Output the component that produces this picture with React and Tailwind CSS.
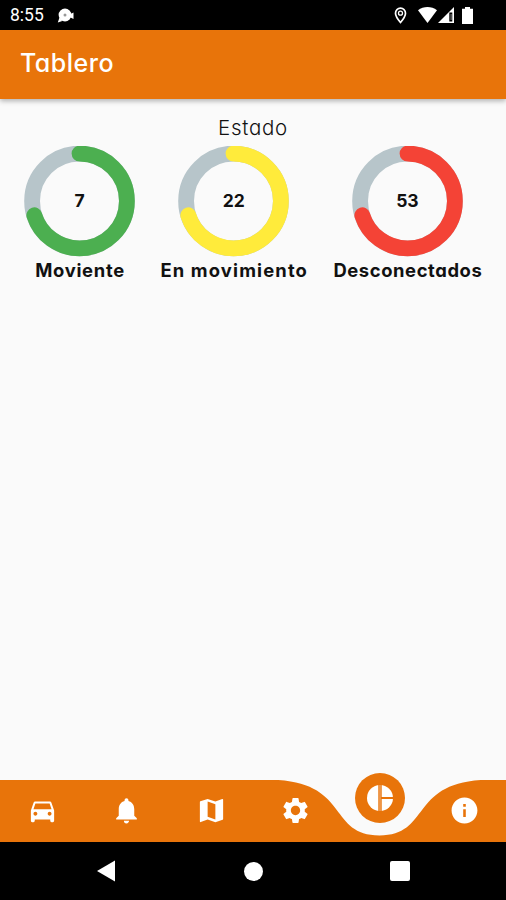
import React from 'react';
import { MdDirectionsCar, MdNotifications, MdMap, MdSettings, MdInfo } from 'react-icons/md';

const RADIUS = 47.4;
const CIRCUMFERENCE = 2 * Math.PI * RADIUS;

const stats = [
    { label: 'Moviente', value: 7, color: '#4caf50', width: 'w-[111px]', tracking: 'tracking-[0.7px]' },
    { label: 'En movimiento', value: 22, color: '#ffeb3b', width: 'w-[148px]', tracking: 'tracking-[1.15px]' },
    { label: 'Desconectados', value: 53, color: '#f44336', width: 'w-[150px]', tracking: 'tracking-[0.6px]' },
];

// Pie cut into a left half and two right quarters
const PieIcon = ({ className }) => (
    <svg viewBox="0 0 26 26" className={className}>
        <circle cx="13" cy="13" r="13" fill="white" />
        <path d="M11.3 0h3.4v26h-3.400z" fill="#e8740a" />
        <path d="M12.5 0h1v26h-1z" fill="#f5b583" />
        <path d="M14 12h12v2H14z" fill="#e8740a" />
    </svg>
);

const navItems = [
    { name: 'Vehículos', Icon: MdDirectionsCar },
    { name: 'Notificaciones', Icon: MdNotifications },
    { name: 'Mapa', Icon: MdMap },
    { name: 'Ajustes', Icon: MdSettings },
    { name: 'Tablero', Icon: PieIcon, active: true },
    { name: 'Información', Icon: MdInfo },
];

const StatusBar = () => (
    <div className="flex h-[30px] shrink-0 items-center bg-black pl-[10px] pr-[32px] text-white">
        <span className="pt-[2px] font-['Roboto',sans-serif] text-[17.5px] leading-none">8:55</span>
        <svg className="ml-[13px] mt-px h-4 w-[17px]" viewBox="0 0 17 16" fill="currentColor">
            <circle cx="8" cy="7" r="6.4" />
            <path d="M2.5 9.5L.8 14.5l4.5-1.5zM12.5 6.5l4-2v6.5l-4-2z" />
            <circle cx="8" cy="7" r="1.5" fill="#999" />
        </svg>
        <div className="ml-auto flex items-center">
            <svg className="h-[17px] w-[13px]" viewBox="0 0 13 17">
                <path d="M6.5 1.2a5 5 0 0 0-5 5c0 3.4 5 9.3 5 9.3s5-5.9 5-9.3a5 5 0 0 0-5-5z" fill="none" stroke="white" strokeWidth="1.7" />
                <circle cx="6.5" cy="6.2" r="2" fill="none" stroke="white" strokeWidth="1.3" />
            </svg>
            <svg className="ml-[11px] h-4 w-[19px]" viewBox="0 0 19 16" fill="currentColor">
                <path d="M0 3.3C5.5-1 13.5-1 19 3.3L9.5 16z" />
            </svg>
            <svg className="ml-px h-4 w-4" viewBox="0 0 16 16">
                <path d="M16 0v16H0z" fill="white" />
                <path d="M11.3 5.5h3v9h-3z" fill="black" />
                <path d="M12.6 7h1v6h-1z" fill="#888" />
            </svg>
            <svg className="ml-[8px] mr-px h-[17px] w-[11px]" viewBox="0 0 11 17" fill="currentColor">
                <path d="M3 0h5v1.8h3V17H0V1.8h3z" />
            </svg>
        </div>
    </div>
);

const StatRing = ({ value, color }) => (
    <div className="relative h-[111px] w-[111px]">
        <svg viewBox="0 0 111 111" className="h-full w-full" fill="none" strokeWidth="15.8">
            <circle cx="55.5" cy="55" r={RADIUS} stroke="#b7c5ca" />
            <circle
                cx="55.5"
                cy="55"
                r={RADIUS}
                stroke={color}
                strokeLinecap="round"
                strokeDasharray={`${CIRCUMFERENCE * 0.7} ${CIRCUMFERENCE}`}
                transform="rotate(-90 55.5 55)"
            />
        </svg>
        <span className="absolute inset-0 flex items-center justify-center pb-px text-[17.5px] font-bold leading-none">
            {value}
        </span>
    </div>
);

const BottomNav = () => (
    <nav className="relative h-[62px] shrink-0">
        {/* bar with the dip under the active item */}
        <svg className="absolute inset-0 h-full w-full" viewBox="0 0 506 62" fill="#e8740a">
            <path d="M0 0H278.3C349.1 4.6 328.9 55.4 379.5 55.4C430.1 55.4 409.9 4.6 480.7 0H506V62H0z" />
        </svg>
        <div className="relative grid grid-cols-6 grid-rows-[62px] text-white">
            {navItems.map(({ name, Icon, active }) => (
                <button key={name} aria-label={name} className="flex h-[62px] items-center justify-center">
                    {active ? (
                        <span className="mb-[27px] ml-px flex h-[50px] w-[50px] shrink-0 items-center justify-center rounded-full bg-[#e8740a]">
                            <Icon className="h-[26px] w-[26px]" />
                        </span>
                    ) : (
                        <Icon className="mb-px ml-px h-[31px] w-[31px]" />
                    )}
                </button>
            ))}
        </div>
    </nav>
);

const SystemNav = () => (
    <div className="flex h-[58px] shrink-0 items-center justify-between bg-black pl-[97px] pr-[96px] text-white">
        <svg className="h-[22px] w-[19px]" viewBox="0 0 19 22" fill="currentColor">
            <path d="M18 .5v21L0 11z" />
        </svg>
        <span className="h-[19px] w-[19px] rounded-full bg-white" />
        <span className="h-[20px] w-[20px] rounded-[2px] bg-white" />
    </div>
);

function App() {
    return (
        <div className="flex h-[900px] w-[506px] flex-col overflow-hidden bg-[#fafafa] font-['Inter',sans-serif] text-[#111] [font-feature-settings:'cv11']">
            <StatusBar />

            <header className="z-10 flex h-[69px] shrink-0 items-center bg-[#e8740a] pb-[3px] pl-[20px] shadow-[0_2px_5px_rgba(0,0,0,0.3)]">
                <h1 className="text-[25px] font-medium leading-none tracking-[0.5px] text-white">Tablero</h1>
            </header>

            <main className="flex-1 pt-[15px]">
                <h2 className="h-8 text-center text-[20.5px] font-light leading-[27px] tracking-[0.7px]">Estado</h2>
                <div className="flex justify-between pl-6 pr-[23.6px]">
                    {stats.map(({ label, value, color, width, tracking }) => (
                        <div key={label} className={`flex flex-col items-center ${width}`}>
                            <StatRing value={value} color={color} />
                            <p className={`whitespace-nowrap pl-px text-[18.4px] font-bold leading-[27px] ${tracking}`}>{label}</p>
                        </div>
                    ))}
                </div>
            </main>

            <BottomNav />
            <SystemNav />
        </div>
    );
}

export default App;
